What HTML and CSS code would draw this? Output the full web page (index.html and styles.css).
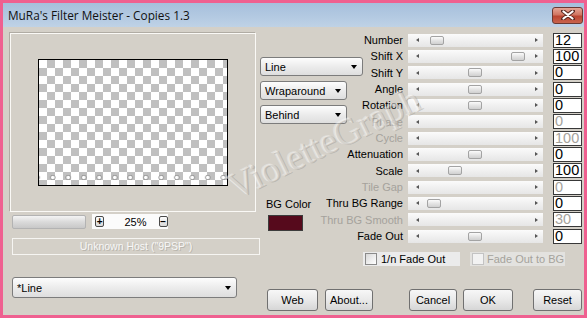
FILE: index.html
```html
<!DOCTYPE html>
<html lang="en">
<head>
  <meta charset="UTF-8">
  <title>MuRa's Filter Meister - Copies 1.3</title>
  <link rel="stylesheet" href="styles.css">
</head>
<body>
  <div class="window">
    <div class="titlebar">
      <span class="title">MuRa's Filter Meister - Copies 1.3</span>
      <div class="close">
        <svg width="14" height="10" viewBox="0 0 14 10"><path d="M2 1 L12 9 M12 1 L2 9" stroke="#5a2a22" stroke-width="4" stroke-linecap="round"/><path d="M2.5 1.5 L11.5 8.5 M11.5 1.5 L2.5 8.5" stroke="#fff" stroke-width="2.2" stroke-linecap="round"/></svg>
      </div>
    </div>

    <div class="client">
      <div class="top">
        <!-- preview -->
        <div class="left">
          <div class="preview"><div class="checker"></div></div>
          <div class="zoom-row">
            <div class="zoom-bar"></div>
            <div class="zoom-ctl">
              <span class="tiny-btn">+</span>
              <span class="zoom-val">25%</span>
              <span class="tiny-btn minus">&minus;</span>
            </div>
          </div>
          <div class="host">Unknown Host ("9PSP")</div>
        </div>

        <!-- modes -->
        <div class="mid">
          <div class="select sel-line"><span>Line</span><i class="arrow"></i></div>
          <div class="select sel-mode"><span>Wraparound</span><i class="arrow"></i></div>
          <div class="select sel-mode"><span>Behind</span><i class="arrow"></i></div>
          <div class="bg-label">BG Color</div>
          <div class="swatch"></div>
        </div>

        <!-- sliders -->
        <div class="params">
          <div class="grid">
            <span class="lbl">Number</span>
            <div class="track"><i class="al"></i><i class="ar"></i><b class="thumb" style="left:22px"></b></div>
            <div class="val">12</div>

            <span class="lbl">Shift X</span>
            <div class="track"><i class="al"></i><i class="ar"></i><b class="thumb" style="left:103px"></b></div>
            <div class="val">100</div>

            <span class="lbl">Shift Y</span>
            <div class="track"><i class="al"></i><i class="ar"></i><b class="thumb" style="left:60px"></b></div>
            <div class="val">0</div>

            <span class="lbl">Angle</span>
            <div class="track"><i class="al"></i><i class="ar"></i><b class="thumb" style="left:60px"></b></div>
            <div class="val">0</div>

            <span class="lbl">Rotation</span>
            <div class="track"><i class="al"></i><i class="ar"></i><b class="thumb" style="left:60px"></b></div>
            <div class="val">0</div>

            <span class="lbl off">Phase</span>
            <div class="track"><i class="al"></i><i class="ar"></i></div>
            <div class="val off">0</div>

            <span class="lbl off">Cycle</span>
            <div class="track"><i class="al"></i><i class="ar"></i></div>
            <div class="val off">100</div>

            <span class="lbl">Attenuation</span>
            <div class="track"><i class="al"></i><i class="ar"></i><b class="thumb" style="left:60px"></b></div>
            <div class="val">0</div>

            <span class="lbl">Scale</span>
            <div class="track"><i class="al"></i><i class="ar"></i><b class="thumb" style="left:40px"></b></div>
            <div class="val">100</div>

            <span class="lbl off">Tile Gap</span>
            <div class="track"><i class="al"></i><i class="ar"></i></div>
            <div class="val off">0</div>

            <span class="lbl">Thru BG Range</span>
            <div class="track"><i class="al"></i><i class="ar"></i><b class="thumb" style="left:19px"></b></div>
            <div class="val">0</div>

            <span class="lbl off">Thru BG Smooth</span>
            <div class="track"><i class="al"></i><i class="ar"></i></div>
            <div class="val off">30</div>

            <span class="lbl">Fade Out</span>
            <div class="track"><i class="al"></i><i class="ar"></i><b class="thumb" style="left:60px"></b></div>
            <div class="val">0</div>
          </div>

          <div class="checks">
            <label class="check"><span class="box"></span>1/n Fade Out</label>
            <label class="check off"><span class="box"></span>Fade Out to BG</label>
          </div>
        </div>
      </div>

      <div class="footer">
        <div class="select big"><span>*Line</span><i class="arrow"></i></div>
        <button class="btn b-web">Web</button>
        <button class="btn b-about">About...</button>
        <button class="btn b-cancel">Cancel</button>
        <button class="btn b-ok">OK</button>
        <button class="btn b-reset">Reset</button>
      </div>
    </div>

    <div class="watermark">VioletteGraph</div>
  </div>
</body>
</html>
```

FILE: styles.css
```css
/* base */
* { margin: 0; padding: 0; box-sizing: border-box; }
body { font-family: 'Liberation Sans', Arial, sans-serif; font-size: 11px; color: #000; background: #ef6090; }

.window { position: relative; width: 587px; height: 318px; border: 3px solid #ef6090; background: #d4d0c8; display: flex; flex-direction: column; overflow: hidden; }

/* title bar */
.titlebar { height: 24px; flex: none; display: flex; align-items: center; justify-content: space-between; padding: 0 1px 0 5px; background: linear-gradient(#a6bfdc, #b4cae2 60%, #bfd2e6); }
.title { font-family: 'Open Sans', sans-serif; font-size: 11.8px; color: #111; }
.close { width: 31px; height: 17px; border: 1px solid #6b3a33; border-radius: 3px; background: linear-gradient(#e6a595, #d07662 45%, #bb4531 55%, #c9644c); display: flex; align-items: center; justify-content: center; }

/* client area */
.client { flex: 1; display: flex; flex-direction: column; padding: 5px 2px 4px 7px; }
.top { display: flex; align-items: flex-start; }

.left { width: 250px; flex: none; padding-top: 1px; }
.preview { width: 246px; height: 179px; border: 1px solid #faf9f6; box-shadow: -1px -1px 0 #b0aca4; display: flex; align-items: center; justify-content: center; }
.checker { width: 190px; height: 127px; border: 1px solid #000;
  background:
    radial-gradient(circle 3px, #fff 0, #fff 45%, #8c8c8c 75%, transparent 100%) 6px 114px / 15.5px 7px repeat-x,
    repeating-conic-gradient(#c0c0c0 0 25%, #fff 0 50%) 0 0 / 16px 16px; }

.zoom-row { display: flex; align-items: center; height: 15px; margin-top: 2px; padding-left: 2px; }
.zoom-bar { width: 74px; height: 14px; border: 1px solid #b3b3b3; border-radius: 2px; background: linear-gradient(#f4f4f4, #dadada 50%, #c8c8c8); }
.zoom-ctl { display: flex; align-items: center; width: 76px; height: 15px; margin-left: 6px; background: #fbfbfb; }
.tiny-btn { width: 12px; height: 11px; margin-left: 3px; border: 1px solid #4a4a4a; border-radius: 2px; background: linear-gradient(#fdfdfd, #d8d8d8); font-size: 10px; font-weight: bold; line-height: 9px; text-align: center; }
.tiny-btn.minus { margin-left: 12px; }
.zoom-val { margin-left: 20px; font-size: 11px; }

.host { width: 248px; height: 17px; margin: 9px 0 0 2px; border: 1px solid #f6f5f2; color: #f7f7f7; text-shadow: 1px 1px 0 #b9b5ad; text-align: center; font-size: 10.5px; line-height: 15px; }

/* combos */
.mid { width: 53px; flex: none; display: flex; flex-direction: column; align-items: flex-start; gap: 5px; padding-top: 25px; }
.select { height: 19px; flex: none; border: 1px solid #7c7c7c; border-radius: 3px; background: linear-gradient(#fdfdfd, #ececec 50%, #dedede); display: flex; align-items: center; justify-content: space-between; padding: 0 5px 0 4px; white-space: nowrap; }
.sel-line { width: 103px; }
.sel-mode { width: 87px; }
.arrow { width: 0; height: 0; border-left: 3.5px solid transparent; border-right: 3.5px solid transparent; border-top: 4px solid #000; margin-top: 1px; }
.bg-label { margin: 69px 0 0 6px; white-space: nowrap; }
.swatch { width: 35px; height: 16px; margin-left: 8px; border: 1px solid #3c3c3c; background: #560a1c; }

/* sliders */
.params { flex: none; }
.grid { display: grid; grid-template-columns: 90px 150px 29px; grid-auto-rows: 16.33px; align-items: center; }
.lbl { text-align: right; white-space: nowrap; }
.off { color: #a5a29c; }
.track { position: relative; width: 135px; height: 13px; margin-left: 5px; background: linear-gradient(#fbfbfb, #eeeeee 60%, #e6e6e6); display: flex; align-items: center; justify-content: space-between; padding: 0 5px 0 8px; }
.al { width: 0; height: 0; border-top: 2.5px solid transparent; border-bottom: 2.5px solid transparent; border-right: 3px solid #555; }
.ar { width: 0; height: 0; border-top: 2.5px solid transparent; border-bottom: 2.5px solid transparent; border-left: 3px solid #555; }
.thumb { position: absolute; top: 2px; width: 14px; height: 9px; border: 1px solid #a3a3a3; border-radius: 2px; background: linear-gradient(#fbfbfb, #e4e4e4 50%, #d0d0d0); }
.val { width: 29px; height: 15px; border: 1px solid #383838; background: #fff; font-size: 14.5px; line-height: 13px; padding-left: 1px; }

.checks { display: flex; gap: 10px; margin-top: 8px; padding-left: 50px; }
.check { display: flex; align-items: center; gap: 4px; width: 97px; height: 14px; padding-left: 2px; background: #ebebeb; white-space: nowrap; }
.check.off { width: 95px; gap: 3px; background: #e3e2df; }
.box { width: 12px; height: 12px; flex: none; border: 1px solid #8a8a8a; background: linear-gradient(135deg, #d8d8d8, #fff); }
.check.off .box { border-color: #c3c3c3; background: #f2f2f2; }

/* bottom row */
.footer { display: flex; align-items: flex-end; margin-top: auto; }
.big { width: 225px; height: 21px; margin: 0 0 13px 2px; }
.btn { height: 22px; border: 1px solid #707070; border-radius: 3px; background: linear-gradient(#f7f7f7, #e9e9e9 50%, #d6d6d6); font-family: 'Liberation Sans', Arial, sans-serif; font-size: 11px; color: #000; }
.b-web { width: 51px; margin-left: 30px; }
.b-about { width: 48px; margin-left: 7px; }
.b-cancel { width: 48px; margin-left: 36px; }
.b-ok { width: 50px; margin-left: 6px; }
.b-reset { width: 49px; margin-left: 20px; }

/* watermark over the dialog */
.watermark { position: absolute; left: 236px; top: 162px; transform-origin: 0 100%; transform: rotate(-26deg); font-family: 'Liberation Serif', serif; font-size: 37px; color: rgba(255, 255, 255, 0.3); text-shadow: 1px 1px 0 rgba(150, 146, 140, 0.4), -1px -1px 0 rgba(255, 255, 255, 0.35); pointer-events: none; white-space: nowrap; }
```
